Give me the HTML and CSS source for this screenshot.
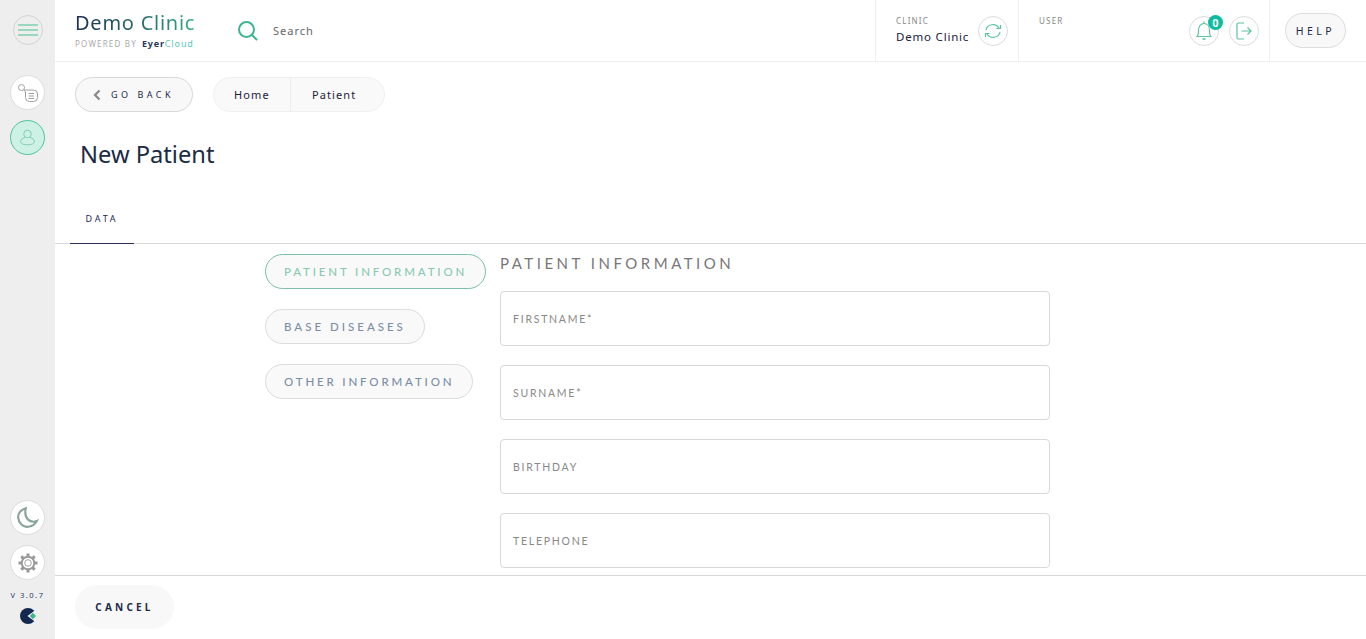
FILE: index.html
```html
<!DOCTYPE html>
<html lang="en">
<head>
<meta charset="utf-8">
<title>New Patient</title>
<link rel="stylesheet" href="styles.css">
</head>
<body>
<div class="app">
  <aside class="sidebar">
    <button class="circle menu"><svg width="20" height="14" viewBox="0 0 20 14"><path d="M0 2h20M0 7h20M0 12h20" stroke="#7fd0b0" stroke-width="1.4" fill="none"/></svg></button>
    <button class="circle big white first"><svg width="20" height="18" viewBox="0 0 20 18" fill="none" stroke="#a0a0a0" stroke-width="1"><circle cx="3.500" cy="3.500" r="3"/><path d="M6 6h9.500a4 4 0 0 1 4 4v3.500a4 4 0 0 1-4 4h-4a4 4 0 0 1-4-4V8z"/><path d="M10.500 9.500h5.500M10.500 12h5.500M10.500 14.500h5.500"/></svg></button>
    <button class="circle big active"><svg width="15" height="17" viewBox="0 0 17 18" fill="none" stroke="#7ccbb0" stroke-width="1.100"><circle cx="8.500" cy="5" r="4.300"/><path d="M5.500 9C2.500 10 .7 11.500.7 13.500c0 2.500 3.500 3.800 7.800 3.800s7.800-1.300 7.800-3.800c0-2-1.800-3.500-4.800-4.500"/></svg></button>
    <div class="spacer"></div>
    <button class="circle big white"><svg width="23" height="23" viewBox="0 0 26 26" fill="none" stroke="#87a39b" stroke-width="2.400"><path d="M11 2.500C5.500 4 2 8.500 2.500 13.500 3 19.500 8 24 13.500 23.500c4.500-.3 8-2.800 10-6.500-7 2.500-15-2-12.500-14.500z"/></svg></button>
    <button class="circle big white gear"><svg width="20" height="20" viewBox="0 0 20 20" fill="none" stroke="#999"><circle cx="10" cy="10" r="3.300" stroke-width=".9"/><circle cx="10" cy="10" r="6.300" stroke-width="1.900"/><path d="M10 .5v3M10 16.500v3M.5 10h3M16.500 10h3M3.300 3.300l2.100 2.100M14.600 14.600l2.100 2.100M16.700 3.300l-2.100 2.100M5.400 14.600l-2.100 2.100" stroke-width="3"/></svg></button>
    <div class="version">V 3.0.7</div>
    <svg class="mark" width="16" height="16" viewBox="0 0 16 16"><circle cx="8" cy="8" r="8" fill="#14294f"/><path d="M16 1.500 7.500 8l8.500 6.500z" fill="#eee"/><path d="M16 8l-3.200-3.200L9.800 8l3 3.200z" fill="#3fb58d"/></svg>
  </aside>
  <div class="main">
    <header class="topbar">
      <div class="brand">
        <div class="brand-name">Demo Clinic</div>
        <div class="powered">POWERED BY<b class="eyer">Eyer</b><span class="cloud">Cloud</span></div>
      </div>
      <div class="search">
        <svg width="21" height="21" viewBox="0 0 21 21" fill="none" stroke="#3fb393" stroke-width="2"><circle cx="9.500" cy="9.500" r="7.500"/><path d="M15 15l4.500 4.500" stroke-linecap="round"/></svg>
        <span>Search</span>
      </div>
      <div class="cell clinic">
        <div class="cell-text">
          <div class="cell-label">CLINIC</div>
          <div class="cell-value">Demo Clinic</div>
        </div>
        <button class="circle"><svg width="18" height="16" viewBox="0 0 18 16" fill="none" stroke="#5cc4a0" stroke-width="1.200"><path d="M2 7a7 6.500 0 0 1 13-2M16 9a7 6.500 0 0 1-13 2"/><path d="M12.500 5.500H16.500V2M5.500 10.500H1.500V14" /></svg></button>
      </div>
      <div class="cell user">
        <div class="cell-label">USER</div>
        <div class="user-actions">
          <button class="circle bell"><svg width="16" height="20" viewBox="0 0 16 20" fill="none" stroke="#5cc4a0" stroke-width="1.200"><path d="M1 15.500c1.500-1 1.500-3 1.500-6C2.500 5 5 2.500 8 2.500s5.500 2.500 5.500 7c0 3 0 5 1.500 6z"/><path d="M8 .5v2"/><path d="M6.500 18h3" stroke-width="1.600"/></svg><span class="badge">0</span></button>
          <button class="circle"><svg width="16" height="18" viewBox="0 0 16 18" fill="none" stroke="#5cc4a0" stroke-width="1.200"><path d="M8 1H2.500A1.500 1.500 0 0 0 1 2.500v13A1.500 1.500 0 0 0 2.500 17H8"/><path d="M5.500 9H15M11.500 5.500 15 9l-3.500 3.500"/></svg></button>
        </div>
      </div>
      <div class="help-cell"><button class="help">HELP</button></div>
    </header>
    <div class="content">
      <div class="crumb-row">
        <button class="back"><svg width="8" height="12" viewBox="0 0 8 12" fill="none" stroke="#888" stroke-width="2.200"><path d="M6.500 1.500 2 6l4.500 4.500"/></svg><span>GO BACK</span></button>
        <nav class="crumbs"><a class="crumb">Home</a><a class="crumb">Patient</a></nav>
      </div>
      <h1 class="title">New Patient</h1>
      <div class="tabs"><div class="tab">DATA</div></div>
      <div class="form-area">
        <div class="section-nav">
          <button class="pill selected">PATIENT INFORMATION</button>
          <button class="pill spaced">BASE DISEASES</button>
          <button class="pill">OTHER INFORMATION</button>
        </div>
        <div class="form">
          <h2 class="form-title">PATIENT INFORMATION</h2>
          <div class="field">FIRSTNAME*</div>
          <div class="field">SURNAME*</div>
          <div class="field">BIRTHDAY</div>
          <div class="field">TELEPHONE</div>
        </div>
      </div>
    </div>
    <footer class="footer"><button class="cancel">CANCEL</button></footer>
  </div>
</div>
</body>
</html>
```
FILE: styles.css
```css
* { box-sizing: border-box; }
html, body { margin: 0; height: 100%; overflow: hidden; }
body { font-family: "Noto Sans", sans-serif; color: #1c2b4a; background: #fff; }
button { font-family: inherit; padding: 0; cursor: pointer; }
.app { display: flex; height: 639px; }

.sidebar { width: 55px; flex: none; background: #eee; display: flex; flex-direction: column; align-items: center; padding: 15px 0; }
.spacer { flex: 1; }
.circle { width: 30px; height: 30px; flex: none; border-radius: 50%; border: 1px solid #dcdcdc; background: #fff; display: flex; align-items: center; justify-content: center; }
.menu { background: #eee; border-color: #d4d4d4; }
.big { width: 35px; height: 35px; }
.first { margin-top: 30px; }
.active { margin-top: 10px; background: #cdf1e4; border-color: #4fc49c; }
.gear { margin-top: 10px; }
.version { font-size: 7.500px; letter-spacing: 1.500px; margin-top: 9px; line-height: 12px; color: #2a3a66; white-space: nowrap; }
.mark { margin-top: 7px; }

.main { flex: 1; min-width: 0; display: flex; flex-direction: column; }
.topbar { height: 62px; flex: none; display: flex; border-bottom: 1px solid #eee; }
.brand { width: 163px; padding: 11px 0 0 20px; flex: none; }
.brand-name { width: 120px; font-size: 20px; line-height: 24px; letter-spacing: .75px; white-space: nowrap; background: linear-gradient(90deg, #1b3053 0%, #2a7f72 70%, #35a98a 100%); -webkit-background-clip: text; background-clip: text; color: transparent; }
.powered { font-size: 8px; letter-spacing: 1.200px; color: #aaa; margin-top: 3px; line-height: 12px; white-space: nowrap; }
.eyer { color: #2a3557; font-size: 9px; letter-spacing: .8px; margin-left: 5px; }
.cloud { color: #5cc8b8; font-size: 9px; letter-spacing: .9px; }
.search { flex: 1; display: flex; align-items: center; gap: 15px; padding-left: 19px; font-size: 11px; letter-spacing: 1px; color: #666; }
.cell { border-left: 1px solid #eee; flex: none; display: flex; }
.clinic { width: 143px; padding: 0 10px 0 20px; align-items: center; justify-content: space-between; }
.cell-label { font-size: 8px; letter-spacing: 1.200px; color: #888; line-height: 12px; }
.cell-value { font-size: 11.500px; letter-spacing: .8px; color: #1b2138; line-height: 16px; margin-top: 2px; white-space: nowrap; }
.cell-text { margin-top: -1px; }
.user { width: 251px; padding: 0 10px 0 20px; justify-content: space-between; }
.user .cell-label { padding-top: 15px; }
.user-actions { display: flex; gap: 10px; align-items: center; }
.bell { position: relative; }
.badge { position: absolute; top: -2px; right: -5px; width: 15px; height: 15px; border-radius: 50%; background: #0dbb9f; color: #fff; font-size: 11px; font-weight: 700; line-height: 15px; text-align: center; }
.help-cell { width: 97px; flex: none; border-left: 1px solid #eee; display: flex; align-items: center; padding-left: 15px; }
.help { width: 61px; height: 35px; border-radius: 18px; border: 1px solid #dcdcdc; background: #f8f8f8; font-size: 10.500px; letter-spacing: 3.500px; color: #1c2b4a; }

.content { flex: 1; min-height: 0; overflow: hidden; display: flex; flex-direction: column; }
.crumb-row { display: flex; gap: 20px; padding: 15px 0 0 20px; }
.back { width: 118px; height: 35px; border-radius: 18px; border: 1px solid #d8d8d8; background: #f8f8f8; display: flex; align-items: center; padding-left: 17px; gap: 10px; font-size: 9px; letter-spacing: 3.500px; color: #1c2b4a; }
.crumbs { display: flex; height: 35px; width: 172px; border-radius: 18px; border: 1px solid #f0f0f0; background: #f9f9f9; overflow: hidden; font-size: 11px; letter-spacing: 1.100px; color: #1b2138; }
.crumb { display: flex; align-items: center; padding-left: 20px; }
.crumb:first-child { width: 77px; border-right: 1px solid #eee; }
.crumb:last-child { padding-left: 21px; }
.title { margin: 26px 0 0 25px; font-size: 23.700px; font-weight: 400; line-height: 32px; color: #1b2b44; }
.tabs { margin-top: 25px; height: 49px; border-bottom: 1px solid #d8d8d8; padding-left: 15px; display: flex; flex: none; }
.tab { width: 64px; height: 49px; border-bottom: 1px solid #2a2f5c; text-align: center; font-size: 9px; letter-spacing: 2.800px; line-height: 48px; color: #1c2b5a; }

.form-area { display: flex; padding-left: 210px; gap: 14px; }
.section-nav { width: 221px; flex: none; display: flex; flex-direction: column; align-items: flex-start; gap: 20px; padding-top: 10px; }
.pill { height: 35px; padding: 0 18px; border-radius: 18px; border: 1px solid #dcdcdc; background: #f9f9f9; font-family: "Lato", sans-serif; font-size: 11.500px; font-weight: 500; letter-spacing: 2.840px; color: #7b8ea6; white-space: nowrap; }
.spaced { letter-spacing: 3px; }
.selected { border-color: #7cc0a8; color: #8ac9b2; }
.form { width: 550px; }
.form-title { margin: 9px 0 0; font-family: "Lato", sans-serif; font-size: 15px; font-weight: 400; line-height: 20px; letter-spacing: 3.500px; color: #777; white-space: nowrap; }
.field { height: 55px; margin-top: 19px; border: 1px solid #d8d8d8; border-radius: 4px; display: flex; align-items: center; padding-left: 12px; font-family: "Lato", sans-serif; font-size: 10.500px; letter-spacing: 1.750px; color: #888; }
.form-title + .field { margin-top: 18px; }

.footer { height: 64px; flex: none; border-top: 1px solid #d8d8d8; padding: 9px 0 0 20px; background: #fff; }
.cancel { width: 99px; height: 44px; border: 0; border-radius: 22px; background: #f8f8f8; font-size: 10px; font-weight: 700; letter-spacing: 3.200px; color: #1c2b4a; }
```
